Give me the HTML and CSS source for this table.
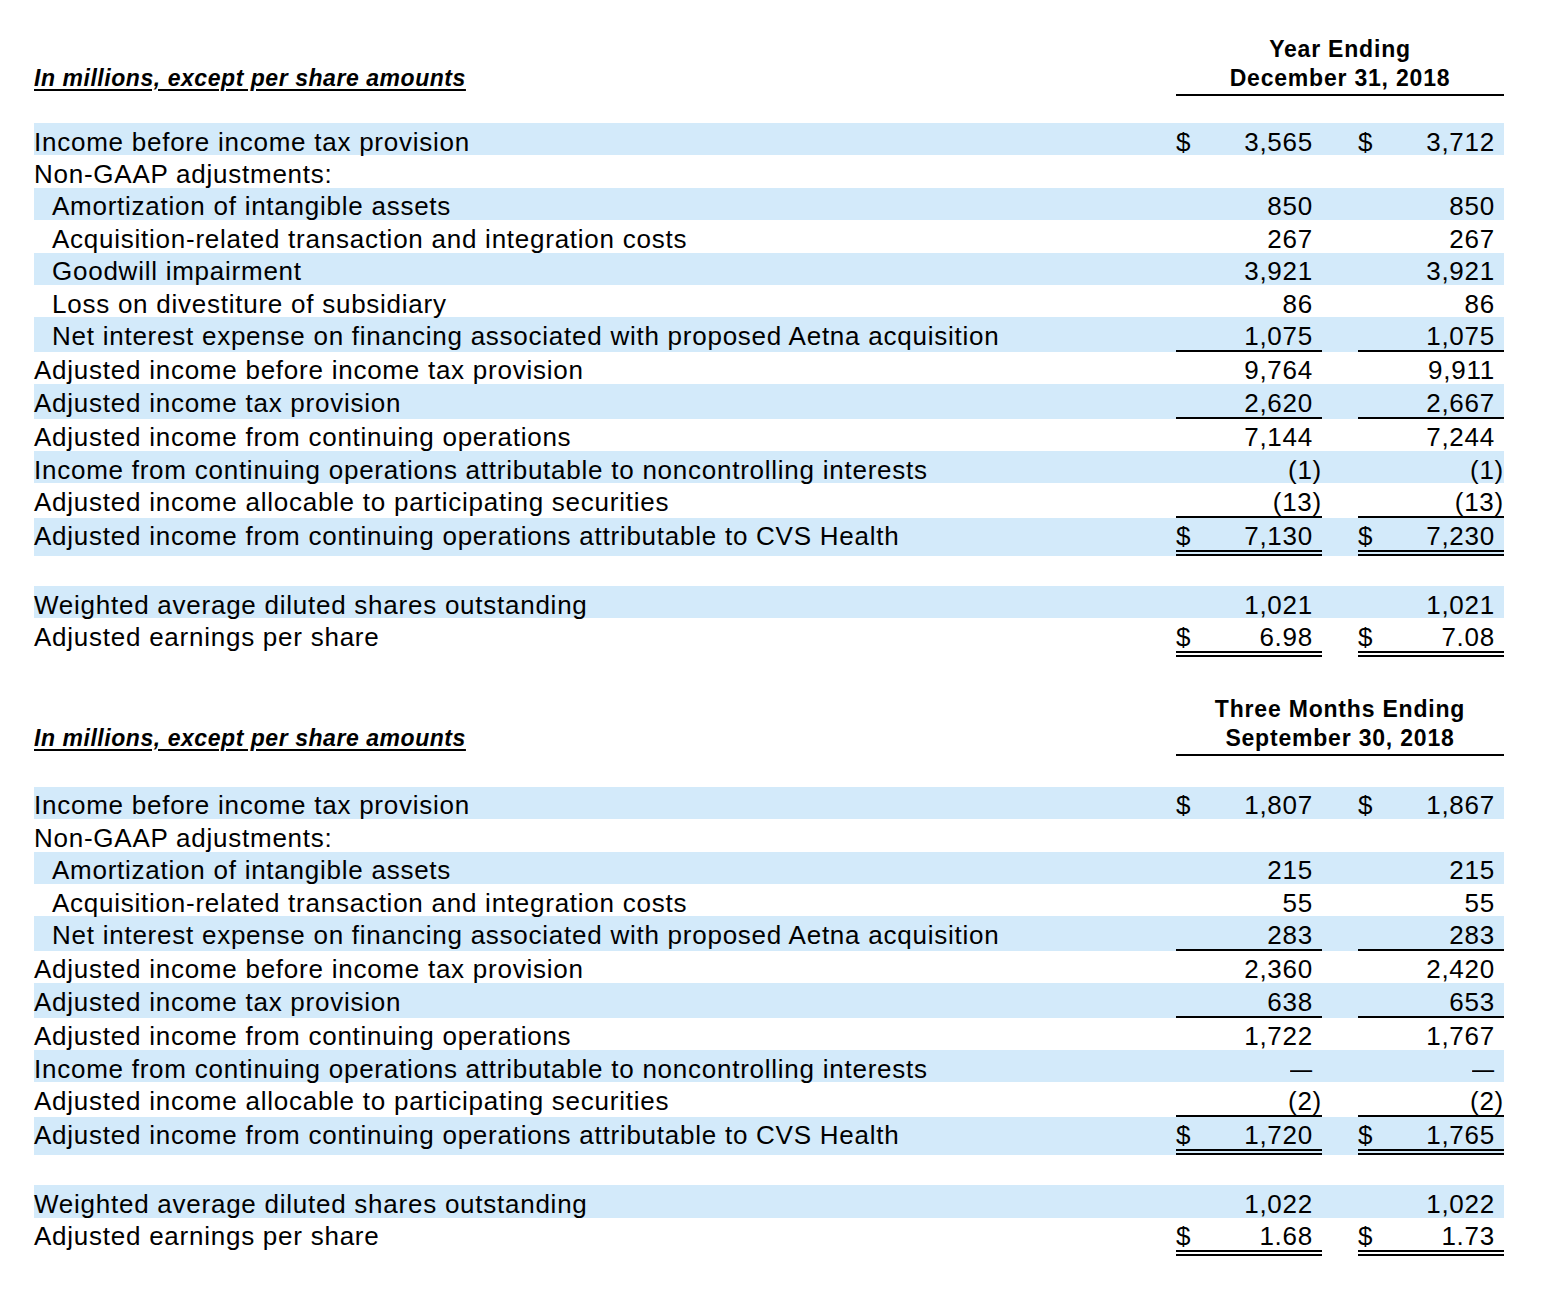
FILE: index.html
```html
<!DOCTYPE html>
<html lang="en">
<head>
<meta charset="utf-8">
<title>Adjusted EPS reconciliation</title>
<link rel="stylesheet" href="styles.css">
</head>
<body>
<main class="page">

  <section class="stmt">
    <div class="stmt-head">
      <span class="units">In millions, except per share amounts</span>
      <div class="period">Year Ending<br>December 31, 2018</div>
    </div>
    <div class="rows">
      <div class="row shade"><div class="label">Income before income tax provision</div><div class="num"><span class="cur">$</span>3,565</div><div class="num"><span class="cur">$</span>3,712</div></div>
      <div class="row"><div class="label">Non-GAAP adjustments:</div><div class="num"></div><div class="num"></div></div>
      <div class="row shade"><div class="label sub">Amortization of intangible assets</div><div class="num">850</div><div class="num">850</div></div>
      <div class="row"><div class="label sub">Acquisition-related transaction and integration costs</div><div class="num">267</div><div class="num">267</div></div>
      <div class="row shade"><div class="label sub">Goodwill impairment</div><div class="num">3,921</div><div class="num">3,921</div></div>
      <div class="row"><div class="label sub">Loss on divestiture of subsidiary</div><div class="num">86</div><div class="num">86</div></div>
      <div class="row shade"><div class="label sub">Net interest expense on financing associated with proposed Aetna acquisition</div><div class="num rule">1,075</div><div class="num rule">1,075</div></div>
      <div class="row"><div class="label">Adjusted income before income tax provision</div><div class="num">9,764</div><div class="num">9,911</div></div>
      <div class="row shade"><div class="label">Adjusted income tax provision</div><div class="num rule">2,620</div><div class="num rule">2,667</div></div>
      <div class="row"><div class="label">Adjusted income from continuing operations</div><div class="num">7,144</div><div class="num">7,244</div></div>
      <div class="row shade"><div class="label">Income from continuing operations attributable to noncontrolling interests</div><div class="num"><span class="neg">(1)</span></div><div class="num"><span class="neg">(1)</span></div></div>
      <div class="row"><div class="label">Adjusted income allocable to participating securities</div><div class="num rule"><span class="neg">(13)</span></div><div class="num rule"><span class="neg">(13)</span></div></div>
      <div class="row shade"><div class="label">Adjusted income from continuing operations attributable to CVS Health</div><div class="num total"><span class="cur">$</span>7,130</div><div class="num total"><span class="cur">$</span>7,230</div></div>
      <div class="row-gap"></div>
      <div class="row shade"><div class="label">Weighted average diluted shares outstanding</div><div class="num">1,021</div><div class="num">1,021</div></div>
      <div class="row"><div class="label">Adjusted earnings per share</div><div class="num total"><span class="cur">$</span>6.98</div><div class="num total"><span class="cur">$</span>7.08</div></div>
    </div>
  </section>

  <section class="stmt">
    <div class="stmt-head">
      <span class="units">In millions, except per share amounts</span>
      <div class="period">Three Months Ending<br>September 30, 2018</div>
    </div>
    <div class="rows">
      <div class="row shade"><div class="label">Income before income tax provision</div><div class="num"><span class="cur">$</span>1,807</div><div class="num"><span class="cur">$</span>1,867</div></div>
      <div class="row"><div class="label">Non-GAAP adjustments:</div><div class="num"></div><div class="num"></div></div>
      <div class="row shade"><div class="label sub">Amortization of intangible assets</div><div class="num">215</div><div class="num">215</div></div>
      <div class="row"><div class="label sub">Acquisition-related transaction and integration costs</div><div class="num">55</div><div class="num">55</div></div>
      <div class="row shade"><div class="label sub">Net interest expense on financing associated with proposed Aetna acquisition</div><div class="num rule">283</div><div class="num rule">283</div></div>
      <div class="row"><div class="label">Adjusted income before income tax provision</div><div class="num">2,360</div><div class="num">2,420</div></div>
      <div class="row shade"><div class="label">Adjusted income tax provision</div><div class="num rule">638</div><div class="num rule">653</div></div>
      <div class="row"><div class="label">Adjusted income from continuing operations</div><div class="num">1,722</div><div class="num">1,767</div></div>
      <div class="row shade"><div class="label">Income from continuing operations attributable to noncontrolling interests</div><div class="num"><span class="dash">—</span></div><div class="num"><span class="dash">—</span></div></div>
      <div class="row"><div class="label">Adjusted income allocable to participating securities</div><div class="num rule"><span class="neg">(2)</span></div><div class="num rule"><span class="neg">(2)</span></div></div>
      <div class="row shade"><div class="label">Adjusted income from continuing operations attributable to CVS Health</div><div class="num total"><span class="cur">$</span>1,720</div><div class="num total"><span class="cur">$</span>1,765</div></div>
      <div class="row-gap"></div>
      <div class="row shade"><div class="label">Weighted average diluted shares outstanding</div><div class="num">1,022</div><div class="num">1,022</div></div>
      <div class="row"><div class="label">Adjusted earnings per share</div><div class="num total"><span class="cur">$</span>1.68</div><div class="num total"><span class="cur">$</span>1.73</div></div>
    </div>
  </section>

</main>
</body>
</html>
```

FILE: styles.css
```css
html, body {
  margin: 0;
  padding: 0;
  background: #ffffff;
}

body {
  font-family: "Liberation Sans", Arial, "Helvetica Neue", sans-serif;
  color: #000000;
}

.page {
  width: 1470px;
  padding: 35px 0 0 34px;
}

.stmt + .stmt {
  margin-top: 38px;
}

/* header */
.stmt-head {
  display: flex;
  justify-content: space-between;
  align-items: flex-end;
  margin-bottom: 27px;
}

.stmt + .stmt .stmt-head {
  margin-bottom: 31px;
}

.units {
  font-size: 23px;
  font-weight: bold;
  font-style: italic;
  text-decoration: underline;
  text-decoration-thickness: 2px;
  text-underline-offset: 3px;
  letter-spacing: 0.55px;
  line-height: 29px;
  padding-bottom: 3px;
}

.period {
  width: 328px;
  text-align: center;
  font-size: 23px;
  font-weight: bold;
  line-height: 29px;
  letter-spacing: 0.8px;
  padding-bottom: 1px;
  border-bottom: 2px solid #000;
}

/* rows */
.row {
  display: grid;
  grid-template-columns: 1fr 146px 146px;
  column-gap: 36px;
  align-items: start;
  font-size: 26px;
  letter-spacing: 0.75px;
}

.row.shade {
  background: #d3eafa;
}

.row-gap {
  height: 30px;
}

.label,
.num {
  height: 26.8px;
  padding-top: 5.6px;
  line-height: 26.8px;
  white-space: nowrap;
}

.label.sub {
  padding-left: 18px;
}

.num {
  text-align: right;
  padding-right: 9px;
}

.num.rule {
  border-bottom: 2px solid #000;
}

.num.total {
  border-bottom: 6px double #000;
}

.cur {
  float: left;
}

.neg {
  margin-right: -9px;
}

.dash {
  display: inline-block;
  transform: scaleX(0.85);
  transform-origin: right center;
}
```
